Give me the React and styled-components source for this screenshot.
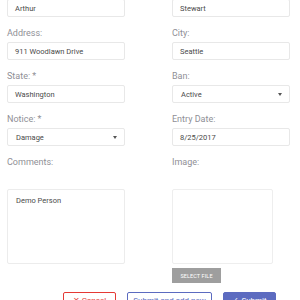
import React from "react";
import styled, { createGlobalStyle } from "styled-components";

const Global = createGlobalStyle`
  html, body { margin: 0; padding: 0; background: #ffffff; }
  body { font-family: Roboto, "Liberation Sans", sans-serif; overflow: hidden; }
  * { box-sizing: border-box; }
`;

const Page = styled.div`
  width: 300px;
  height: 300px;
  overflow: hidden;
`;

const Form = styled.div`
  display: grid;
  grid-template-columns: 1fr 1fr;
  column-gap: 47px;
  row-gap: 10px;
  padding: 0 10px 0 7px;
  margin-top: -1px;
`;

const Field = styled.div`
  display: flex;
  flex-direction: column;
  align-items: flex-start;
`;

const Label = styled.div`
  font-size: 9px;
  line-height: 12px;
  color: #8f8f96;
  margin-bottom: ${(p) => (p.$tall ? "21px" : "3px")};
`;

const Input = styled.div`
  width: 100%;
  height: 18px;
  border: 1px solid #e8e8e8;
  border-radius: 2px;
  padding: 0 ${(p) => (p.$select ? "8px" : "7px")};
  display: flex;
  align-items: center;
  justify-content: space-between;
  font-size: 7.5px;
  color: #4a4a4a;
`;

const Arrow = styled.span`
  width: 0;
  height: 0;
  border-left: 2.5px solid transparent;
  border-right: 2.5px solid transparent;
  border-top: 3px solid #555;
  margin-right: -1px;
`;

const TextArea = styled.div`
  width: 100%;
  height: 75px;
  border: 1px solid #ececec;
  border-radius: 2px;
  padding: 6px 8px;
  font-size: 7.5px;
  color: #4a4a4a;
`;

const ImageBox = styled.div`
  width: 101px;
  height: 75px;
  border: 1px solid #eeeeee;
  border-radius: 2px;
`;

const FileButton = styled.div`
  margin-top: 4px;
  width: 49px;
  height: 15px;
  background: #9e9e9e;
  color: #ffffff;
  font-size: 5.5px;
  display: flex;
  align-items: center;
  justify-content: center;
  letter-spacing: 0.1px;
`;

const Actions = styled.div`
  display: flex;
  margin-top: 9px;
  padding-left: 63px;
  gap: 11px;
`;

const Button = styled.div`
  height: 20px;
  width: ${(p) => p.$w}px;
  border-radius: 2px;
  border: 1px solid ${(p) => p.$color};
  background: ${(p) => (p.$filled ? p.$color : "#ffffff")};
  color: ${(p) => (p.$filled ? "#ffffff" : p.$color)};
  font-size: 8px;
  line-height: 10px;
  display: flex;
  align-items: flex-start;
  justify-content: center;
  padding-top: 3px;
  gap: 3px;
`;

function TextField({ label, value }) {
  return (
    <Field>
      {label && <Label>{label}</Label>}
      <Input>{value}</Input>
    </Field>
  );
}

function SelectField({ label, value }) {
  return (
    <Field>
      <Label>{label}</Label>
      <Input $select>
        <span>{value}</span>
        <Arrow />
      </Input>
    </Field>
  );
}

export default function App() {
  return (
    <Page>
      <Global />
      <Form>
        <TextField value="Arthur" />
        <TextField value="Stewart" />
        <TextField label="Address:" value="911 Woodlawn Drive" />
        <TextField label="City:" value="Seattle" />
        <TextField label="State: *" value="Washington" />
        <SelectField label="Ban:" value="Active" />
        <SelectField label="Notice: *" value="Damage" />
        <TextField label="Entry Date:" value="8/25/2017" />
        <Field>
          <Label $tall>Comments:</Label>
          <TextArea>Demo Person</TextArea>
        </Field>
        <Field>
          <Label $tall>Image:</Label>
          <ImageBox />
          <FileButton>SELECT FILE</FileButton>
        </Field>
      </Form>
      <Actions>
        <Button $w={53} $color="#e53935">✕ Cancel</Button>
        <Button $w={85} $color="#5c6bc0">Submit and add new</Button>
        <Button $w={53} $color="#5c6bc0" $filled>✓ Submit</Button>
      </Actions>
    </Page>
  );
}
